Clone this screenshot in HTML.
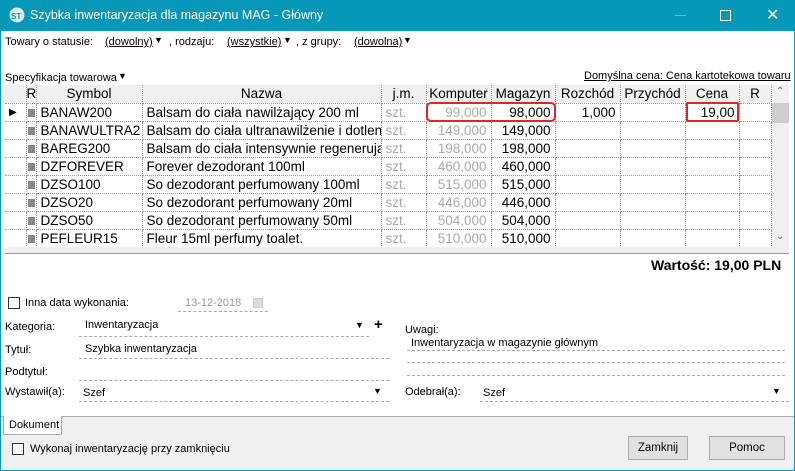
<!DOCTYPE html><html><head><meta charset="utf-8"><style>
*{box-sizing:border-box;margin:0;padding:0}
body{width:795px;height:471px;overflow:hidden;font-family:"Liberation Sans",sans-serif;font-size:11px;color:#000;background:#fff;position:relative}
.abs{position:absolute;white-space:nowrap}
#win{position:absolute;left:0;top:0;width:795px;height:471px;border:1px solid #0797b9;border-top:none}
#title{position:absolute;left:0;top:0;width:795px;height:31px;background:#0797b9;color:#fff;font-size:12.5px}
table{border-collapse:collapse;position:absolute;left:5px;top:85px;font-size:13.5px;table-layout:fixed;width:766px}
td{height:18px;border-right:1px dotted #999;border-bottom:1px dotted #999;padding:0 4px;white-space:nowrap;overflow:hidden}
tr.h td{background:#f0f0f0;text-align:center;border-bottom:1px dotted #999}
.g{color:#aaa;text-align:right}.r{text-align:right}
.dash{position:absolute;border-bottom:1px dashed #aaa}
.cb{position:absolute;width:12px;height:12px;border:1px solid #333;background:#fff}
.btn{position:absolute;height:24px;border:1px solid #adadad;background:#e1e1e1;text-align:center;line-height:22px;font-size:11.5px}
.sq{display:inline-block;width:7px;height:8px;background:#888}
</style></head><body>
<div id="title"><svg class="abs" style="left:9px;top:7px" width="16" height="16"><circle cx="8" cy="8" r="7.5" fill="#dfeef5"/><text x="2" y="12" font-size="8" font-weight="bold" fill="#0797b9" font-family="Liberation Sans">ST</text></svg><span class="abs" style="left:30px;top:8px">Szybka inwentaryzacja dla magazynu MAG - Główny</span>
<div class="abs" style="left:675px;top:15px;width:11px;height:1px;background:#5cc0d8"></div>
<div class="abs" style="left:720px;top:10px;width:11px;height:11px;border:1px solid #fff"></div>
<span class="abs" style="left:766px;top:5px;font-size:16px;color:#fff">✕</span></div>
<div id="win"></div>
<span class="abs" style="left:5px;top:36px">Towary o statusie:</span>
<span class="abs" style="left:105px;top:36px;text-decoration:underline">(dowolny)</span><span class="abs" style="left:154px;top:35px;font-size:9px">▼</span><span class="abs" style="left:169px;top:36px">, rodzaju:</span>
<span class="abs" style="left:227px;top:36px;text-decoration:underline">(wszystkie)</span><span class="abs" style="left:283px;top:35px;font-size:9px">▼</span><span class="abs" style="left:296px;top:36px">, z grupy:</span>
<span class="abs" style="left:354px;top:36px;text-decoration:underline">(dowolna)</span><span class="abs" style="left:403px;top:35px;font-size:9px">▼</span>
<span class="abs" style="left:5px;top:72px">Specyfikacja towarowa</span><span class="abs" style="left:118px;top:71px;font-size:9px">▼</span>
<span class="abs" style="left:584px;top:70px;text-decoration:underline">Domyślna cena: Cena kartotekowa towaru</span>
<table>
<colgroup><col style="width:21px"><col style="width:10px"><col style="width:106px"><col style="width:239px"><col style="width:45px"><col style="width:65px"><col style="width:64px"><col style="width:65px"><col style="width:65px"><col style="width:54px"><col style="width:32px"></colgroup>
<tr class="h"><td></td><td style="padding:0">R</td><td>Symbol</td><td>Nazwa</td><td>j.m.</td><td style="padding:0">Komputer</td><td style="padding:0">Magazyn</td><td style="padding:0">Rozchód</td><td style="padding:0">Przychód</td><td>Cena</td><td>R</td></tr>
<tr><td style="font-size:10px">▶</td><td style="padding:0 1px"><span class="sq"></span></td><td>BANAW200</td><td>Balsam do ciała nawilżający 200 ml</td><td style="color:#aaa">szt.</td><td class="g">99,000</td><td class="r">98,000</td><td class="r">1,000</td><td></td><td class="r">19,00</td><td></td></tr>
<tr><td></td><td style="padding:0 1px"><span class="sq"></span></td><td>BANAWULTRA2</td><td>Balsam do ciała ultranawilżenie i dotleni</td><td style="color:#aaa">szt.</td><td class="g">149,000</td><td class="r">149,000</td><td></td><td></td><td></td><td></td></tr>
<tr><td></td><td style="padding:0 1px"><span class="sq"></span></td><td>BAREG200</td><td>Balsam do ciała intensywnie regenerują</td><td style="color:#aaa">szt.</td><td class="g">198,000</td><td class="r">198,000</td><td></td><td></td><td></td><td></td></tr>
<tr><td></td><td style="padding:0 1px"><span class="sq"></span></td><td>DZFOREVER</td><td>Forever dezodorant 100ml</td><td style="color:#aaa">szt.</td><td class="g">460,000</td><td class="r">460,000</td><td></td><td></td><td></td><td></td></tr>
<tr><td></td><td style="padding:0 1px"><span class="sq"></span></td><td>DZSO100</td><td>So dezodorant perfumowany 100ml</td><td style="color:#aaa">szt.</td><td class="g">515,000</td><td class="r">515,000</td><td></td><td></td><td></td><td></td></tr>
<tr><td></td><td style="padding:0 1px"><span class="sq"></span></td><td>DZSO20</td><td>So dezodorant perfumowany 20ml</td><td style="color:#aaa">szt.</td><td class="g">446,000</td><td class="r">446,000</td><td></td><td></td><td></td><td></td></tr>
<tr><td></td><td style="padding:0 1px"><span class="sq"></span></td><td>DZSO50</td><td>So dezodorant perfumowany 50ml</td><td style="color:#aaa">szt.</td><td class="g">504,000</td><td class="r">504,000</td><td></td><td></td><td></td><td></td></tr>
<tr><td></td><td style="padding:0 1px"><span class="sq"></span></td><td>PEFLEUR15</td><td>Fleur 15ml perfumy toalet.</td><td style="color:#aaa">szt.</td><td class="g">510,000</td><td class="r">510,000</td><td></td><td></td><td></td><td></td></tr>
</table>
<div class="abs" style="left:426px;top:102px;width:130px;height:20px;border:2px solid #e0262b;border-radius:5px"></div>
<div class="abs" style="left:686px;top:102px;width:53px;height:20px;border:2px solid #e0262b;border-radius:2px"></div>
<div class="abs" style="left:772px;top:85px;width:17px;height:162px;background:#f0f0f0"><span class="abs" style="left:4px;top:1px;font-size:10px;color:#666">⌃</span><div class="abs" style="left:0;top:18px;width:17px;height:20px;background:#cdcdcd"></div><span class="abs" style="left:4px;top:146px;font-size:10px;color:#666">⌄</span></div>
<div class="abs" style="left:5px;top:247px;width:784px;height:7px;background:#f0f0f0;border-bottom:1px solid #999"></div>
<span class="abs" style="left:651px;top:257px;font-size:14px;font-weight:bold">Wartość: 19,00 PLN</span>
<div class="cb" style="left:8px;top:297px"></div><span class="abs" style="left:25px;top:297px">Inna data wykonania:</span>
<span class="abs" style="left:185px;top:297px;color:#999">13-12-2018</span><div class="dash" style="left:178px;top:311px;width:90px"></div><div class="abs" style="left:253px;top:298px;width:10px;height:10px;background:#ddd;border:1px solid #ccc"></div>
<span class="abs" style="left:5px;top:321px">Kategoria:</span><span class="abs" style="left:85px;top:319px">Inwentaryzacja</span><div class="dash" style="left:79px;top:336px;width:290px"></div><span class="abs" style="left:355px;top:320px;font-size:9px">▼</span><span class="abs" style="left:374px;top:316px;font-size:15px;font-weight:bold">+</span>
<span class="abs" style="left:5px;top:344px">Tytuł:</span><span class="abs" style="left:85px;top:343px">Szybka inwentaryzacja</span><div class="dash" style="left:79px;top:358px;width:310px"></div>
<span class="abs" style="left:5px;top:366px">Podtytuł:</span><div class="dash" style="left:79px;top:380px;width:310px"></div>
<span class="abs" style="left:5px;top:386px">Wystawił(a):</span><span class="abs" style="left:83px;top:387px">Szef</span><div class="dash" style="left:79px;top:401px;width:310px"></div><span class="abs" style="left:373px;top:386px;font-size:9px">▼</span>
<span class="abs" style="left:405px;top:324px">Uwagi:</span><span class="abs" style="left:411px;top:337px">Inwentaryzacja w magazynie głównym</span>
<div class="dash" style="left:407px;top:350px;width:378px"></div><div class="dash" style="left:407px;top:362px;width:378px"></div><div class="dash" style="left:407px;top:375px;width:378px"></div>
<span class="abs" style="left:405px;top:386px">Odebrał(a):</span><span class="abs" style="left:483px;top:387px">Szef</span><div class="dash" style="left:480px;top:401px;width:309px"></div><span class="abs" style="left:772px;top:386px;font-size:9px">▼</span>
<div class="abs" style="left:1px;top:416px;width:793px;height:54px;background:#f0f0f0;border-top:1px solid #aaa"></div>
<div class="abs" style="left:3px;top:416px;width:59px;height:19px;background:#fff;border:1px solid #aaa;border-top:none;padding:3px 0 0 5px;font-size:11px">Dokument</div>
<div class="cb" style="left:12px;top:443px"></div><span class="abs" style="left:30px;top:443px">Wykonaj inwentaryzację przy zamknięciu</span>
<div class="btn" style="left:628px;top:436px;width:60px">Zamknij</div>
<div class="btn" style="left:709px;top:436px;width:76px">Pomoc</div>
</body></html>
